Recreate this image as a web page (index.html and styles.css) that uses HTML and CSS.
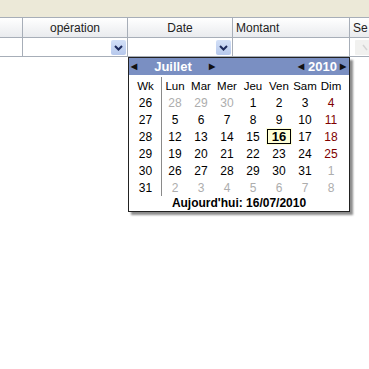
FILE: index.html
```html
<!DOCTYPE html>
<html>
  <head>
    <title>Grille</title>
    <link rel="stylesheet" href="styles.css">
  </head>
  <body>
    <div class="toolbar"></div>
    <div class="grid">
      <div class="row head">
        <div class="cell c0"></div>
        <div class="cell c1 center">opération</div>
        <div class="cell c2 center">Date</div>
        <div class="cell c3">Montant</div>
        <div class="cell c4">Se</div>
      </div>
      <div class="row filter">
        <div class="cell c0"></div>
        <div class="cell c1"><span class="drop"><svg width="15" height="15" viewBox="0 0 15 15"><polyline points="4,6 7.5,9.5 11,6" fill="none" stroke="#1d2a5c" stroke-width="2"/></svg></span></div>
        <div class="cell c2"><span class="drop"><svg width="15" height="15" viewBox="0 0 15 15"><polyline points="4,6 7.5,9.5 11,6" fill="none" stroke="#1d2a5c" stroke-width="2"/></svg></span></div>
        <div class="cell c3"></div>
        <div class="cell c4"><span class="drop off"><svg width="15" height="15" viewBox="0 0 15 15"><line x1="8" y1="5" x2="12" y2="10" stroke="#d4d4d4" stroke-width="1.5"/></svg></span></div>
      </div>
    </div>

    <div class="calendar">
      <div class="cal-title">
        <div class="nav"><span class="arr">&#9664;</span><span class="month">Juillet</span><span class="arr">&#9654;</span></div>
        <div class="nav"><span class="arr">&#9664;</span><span class="year">2010</span><span class="arr">&#9654;</span></div>
      </div>
      <table class="cal-days">
        <tr class="names"><td class="wk">Wk</td><td>Lun</td><td>Mar</td><td>Mer</td><td>Jeu</td><td>Ven</td><td>Sam</td><td>Dim</td></tr>
        <tr><td class="wk">26</td><td class="other">28</td><td class="other">29</td><td class="other">30</td><td>1</td><td>2</td><td>3</td><td class="sun">4</td></tr>
        <tr><td class="wk">27</td><td>5</td><td>6</td><td>7</td><td>8</td><td>9</td><td>10</td><td class="sun">11</td></tr>
        <tr><td class="wk">28</td><td>12</td><td>13</td><td>14</td><td>15</td><td class="today">16</td><td>17</td><td class="sun">18</td></tr>
        <tr><td class="wk">29</td><td>19</td><td>20</td><td>21</td><td>22</td><td>23</td><td>24</td><td class="sun">25</td></tr>
        <tr><td class="wk">30</td><td>26</td><td>27</td><td>28</td><td>29</td><td>30</td><td>31</td><td class="other">1</td></tr>
        <tr><td class="wk">31</td><td class="other">2</td><td class="other">3</td><td class="other">4</td><td class="other">5</td><td class="other">6</td><td class="other">7</td><td class="other">8</td></tr>
      </table>
      <div class="cal-foot">Aujourd'hui: 16/07/2010</div>
    </div>
  </body>
</html>
```

FILE: styles.css
```css
/* grid + popup calendar */
body { margin: 0; background: #fff; font: 11px "Liberation Sans", Arial, sans-serif; color: #000; }

.toolbar { height: 17px; background: #ece9d8; border-bottom: 1px solid #a7aeb8; }

.row { display: flex; border-bottom: 1px solid #a7aeb8; }
.row.head { height: 19px; background: linear-gradient(#ffffff, #e9ebee); }
.row.filter { height: 18px; background: #fff; }
.cell { box-sizing: border-box; border-right: 1px solid #a7aeb8; display: flex; align-items: center; padding: 0 3px; white-space: nowrap; overflow: hidden; flex: none; }
.head .cell { font-size: 12px; color: #222; }
.center { justify-content: center; }
.c0 { width: 23px; }
.c1 { width: 105px; }
.c2 { width: 105px; }
.c3 { width: 117px; }
.c4 { flex: 1; border-right: 0; }
.filter .cell { justify-content: flex-end; padding: 0 1px 0 0; }
.filter .c4 { justify-content: flex-start; padding-left: 5px; }

.drop { width: 15px; height: 15px; display: block; background: linear-gradient(#d3e0f7, #b6c8ec); border-radius: 2px; }
.drop svg { display: block; }
.drop.off { background: #f1f1ef; border-radius: 1px; }

.calendar { position: absolute; left: 128px; top: 57px; width: 220px; background: #fff; border: 1px solid #222; box-shadow: 3px 3px 2px rgba(0, 0, 0, .45); }
.cal-title { height: 17px; background: #7a8fc2; color: #fff; font-weight: bold; display: flex; justify-content: space-between; align-items: center; padding: 0 3px 0 2px; font-size: 12px; }
.nav { display: flex; align-items: center; }
.arr { color: #111; font-size: 8px; }
.month { width: 72px; text-align: center; font-size: 13px; }
.year { padding: 0 3px 0 4px; font-size: 13px; }

.cal-days { border-collapse: collapse; margin: 2px 0 0 1px; font-size: 12px; }
.cal-days td { width: 26px; height: 17px; padding: 0; text-align: center; }
.cal-days .names td { font-size: 11.5px; }
.cal-days td.wk { width: 31px; border-right: 1px solid #8a8a8a; }
.cal-days .other { color: #adadad; }
.cal-days .sun { color: #800000; }
.cal-days .today { font-weight: bold; font-size: 13px; background: #ffffd6; outline: 1px solid #000; outline-offset: -2px; }
.cal-foot { text-align: center; font-weight: bold; font-size: 12px; padding: 0 0 1px; line-height: 14px; }
```
